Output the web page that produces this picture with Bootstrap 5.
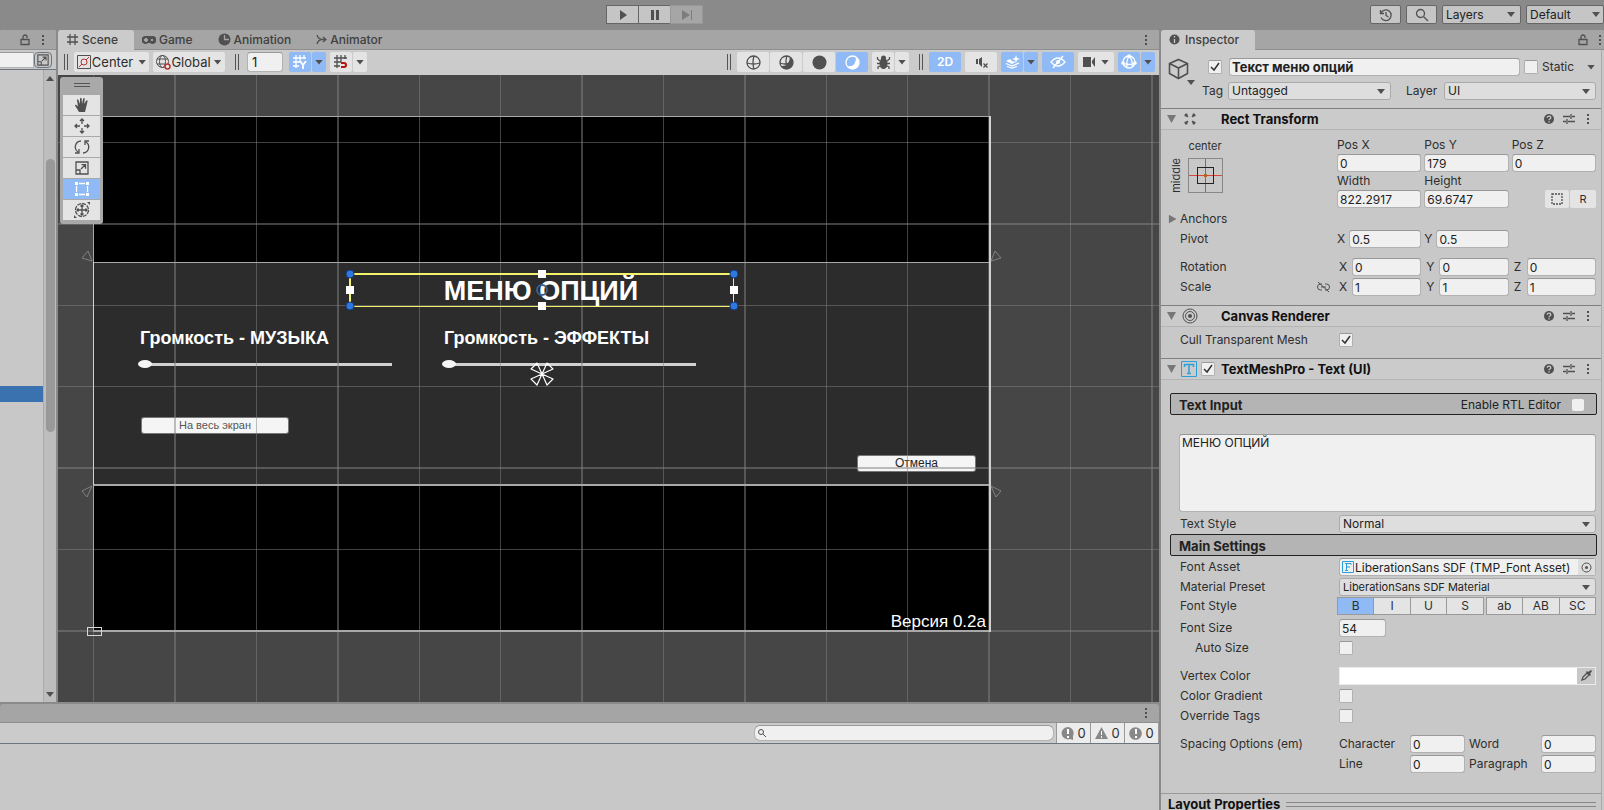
<!DOCTYPE html>
<html lang="en">
<head>
<meta charset="utf-8">
<meta name="viewport" content="width=device-width, initial-scale=1">
<title>Scene editor</title>
<link rel="stylesheet" href="https://cdn.jsdelivr.net/npm/bootstrap@5.3.0/dist/css/bootstrap.min.css">
<style>
:root{--ink:#2e2e2e;--pane:#c8c8c8;--bar:#cbcbcb;--strip:#a5a5a5;--edge:#8a8a8a;--pick:#8fbaf5;--btn:#e4e4e4;--field:#f0f0f0}
body{font:12px/18px Inter,"Liberation Sans",sans-serif;color:var(--ink);background:var(--edge);overflow:hidden}
svg{display:block;flex:none}
.ic{fill:none;stroke:#505050;stroke-width:1.3}
.ic .f{fill:#505050;stroke:none}
.app{display:flex;flex-direction:column;height:100vh}
.work{display:grid;grid-template:minmax(0,1fr)/minmax(0,1fr) 443px;flex:1;min-height:0;column-gap:2px}
.leftside{display:flex;flex-direction:column;min-width:0}
.docks{display:grid;grid-template:minmax(0,1fr)/56px minmax(0,1fr);column-gap:2px;flex:1;min-height:0}
button{border:0;padding:0;background:none;color:inherit;font:inherit;display:flex;align-items:center;justify-content:center}

/* top bar */
.topbar{height:30px;padding-top:5px}
.tb{height:19px;background:#c5c5c5;border:1px solid #666;border-radius:2px}
.play .tb{width:33px;margin-right:-1px;border-radius:0}
.play .off{background:#a6a6a6;border-color:#979797}
.form-select.tsel{width:78px;height:19px;background-color:#c5c5c5;border-color:#666;border-radius:2px}
.play{margin-left:606px}

/* tabs */
.tabs{height:20px;background:var(--strip);border-bottom:1px solid #8f8f8f;display:flex;align-items:center;border-radius:3px 3px 0 0;flex:none}
.tab-i{height:20px;display:flex;align-items:center;gap:3px;padding:0 17px 0 8px;color:#404040;font-weight:500;text-decoration:none;border-radius:3px 3px 0 0}
.tab-i.on{background:var(--bar);padding-right:16px}
.more{margin-left:auto;margin-right:11px}
.pane{background:var(--pane);display:flex;flex-direction:column;min-width:0;min-height:0;border-radius:3px 3px 0 0;overflow:hidden}

/* shared controls */
.form-control,.form-select{font:12px/16px Inter,"Liberation Sans",sans-serif;color:#222;height:18px;min-height:0;padding:0 2px;border:1px solid #b2b2b2;border-top-color:#999;border-radius:3px;background-color:var(--field);box-shadow:none;width:100%;min-width:0}
.form-select{background-color:#dedede;border-color:#aaa;padding:0 16px 0 3px;background-image:url("data:image/svg+xml,%3Csvg xmlns='http://www.w3.org/2000/svg' viewBox='0 0 8 5'%3E%3Cpath d='M0 0h8L4 5z' fill='%23505050'/%3E%3C/svg%3E");background-size:8px 5px;background-position:right 5px center}
.tick{appearance:none;width:14px;height:14px;margin:0;border:1px solid #b0b0b0;border-top-color:#999;border-radius:2px;background:var(--field) center/12px 12px no-repeat;flex:none}
.tick:checked{background-image:url("data:image/svg+xml,%3Csvg xmlns='http://www.w3.org/2000/svg' viewBox='0 0 12 12'%3E%3Cpath d='M2 6l3 3 5-7' fill='none' stroke='%23333' stroke-width='1.5'/%3E%3C/svg%3E")}
.dd{width:8px;height:5px;background:#505050;clip-path:polygon(0 0,100% 0,50% 100%);flex:none}
.fold{width:9px;height:8px;background:#777}

/* scene toolbar */
.sbar{height:25px;background:var(--bar);display:flex;align-items:center;padding:0 4px 1px 6px;flex:none;font-size:13px}
.sbar .form-control{font-size:13px}
.grip{width:4px;height:16px;border:solid #555;border-width:0 1px;flex:none}
.tg{height:20px;background:var(--btn);border-radius:2px}
.tg.on{background:var(--pick);color:#fff}
.tg.on .ic,.tools .on .ic{stroke:#fff}.tg.on .ic .f,.tools .on .ic .f{fill:#fff}
.w32{width:32px}.w22{width:22px}.w14{width:14px}
.btns{display:flex;gap:1px}

/* scene canvas */
.view{position:relative;flex:1;background:#464646;overflow:hidden;font-family:"Liberation Sans",Arial,sans-serif;color:#fff}
.view>*{position:absolute}
.frame{left:35px;top:41px;width:897px;height:515px;background:#000}
.menu{left:36px;top:187px;width:895px;height:223px;background:#2c2c2c}
.ttl{left:291px;top:200px;width:384px;font-size:27px;line-height:32px;font-weight:700;text-align:center;margin:0}
.vol{font-size:18px;line-height:20px;font-weight:700;white-space:nowrap}
.sld{appearance:none;width:254px;height:8px;background:linear-gradient(#d2d0d0,#d2d0d0) 4px 3px/250px 3px no-repeat;margin:0}
.sld::-webkit-slider-thumb{appearance:none;width:14px;height:8px;border-radius:50%;background:#f5f5f5;border:0}
.gb{background:#f5f5f5;border-radius:2px;color:#555;box-shadow:0 0 0 1px #777;line-height:15px;height:15px}
.ver{right:0;top:1px;font-size:17px;line-height:20px}
.tools{left:2px;top:2px;width:43px;background:#a9a9a9;border-radius:3px;padding:6px 3px 4px;display:flex;flex-direction:column;gap:1px}
.tools .hand{width:16px;height:4px;border:solid #555;border-width:1px 0;margin:0 auto 7px}
.tools button{height:20px;background:var(--btn)}
.tools .on{background:var(--pick)}

/* hierarchy */
.sb{width:13px;border-left:1px solid #aaa;background:#bdbdbd;display:flex;flex-direction:column;align-items:center;padding:6px 0 5px}
.thumb{width:9px;height:273px;border-radius:5px;background:#999}

/* console */
.console{height:108px;padding-top:2px;flex:none}
.cnt{height:20px;width:33px;background:#ececec;gap:3px;font-size:13px}

/* inspector */
.insp{background:var(--pane);min-width:0;border-radius:3px 3px 0 0;overflow:hidden;display:flex;flex-direction:column}
.body-i{width:441px;border-right:1px solid #aaa}
.ch{display:flex;align-items:center;height:22px;border-top:1px solid #7f7f7f;border-bottom:1px solid #b4b4b4;background:var(--bar);padding:0 11px 0 6px;color:#111}
.ch h2,.box h3,.lp{font-size:13px;line-height:18px;font-weight:700;margin:0}
.rw{display:grid;grid-template-columns:159px minmax(0,1fr);height:18px;margin:0 5px 2px 19px;align-items:center}
.tri3{display:grid;grid-template-columns:repeat(3,minmax(0,1fr));column-gap:3px}
.wide{column-gap:5px}
.xyz{display:flex;gap:4px;align-items:center}
.box{height:22px;border:1px solid #222;border-radius:2px;background:#b4b4b4;margin:0 4px 0 9px;padding:2px 12px 0 8px;display:flex;align-items:center;color:#222}
.fs{height:18px;background:var(--btn);border:1px solid #999;margin-right:-1px;flex:1}
.fs.on{background:var(--pick)}
.anch{width:35px;height:35px}
</style>
</head>
<body>
<svg width="0" height="0" class="position-absolute" aria-hidden="true">
  <symbol id="lock" viewBox="0 0 10 12"><path d="M1 5.500h8v5H1zM3 5.500V3a2 2 0 0 1 4 0v1"/></symbol>
  <symbol id="dots" viewBox="0 0 3 12"><path fill="#505050" stroke="none" d="M0 1h2v2H0zM0 5h2v2H0zM0 9h2v2H0z"/></symbol>
  <symbol id="help" viewBox="0 0 12 12"><circle cx="6" cy="6" r="5" fill="#505050" stroke="none"/><path stroke="#cbcbcb" d="M4.200 4.700a1.800 1.500 0 1 1 2.600 1.300q-.8.300-.8 1.200M6 8.200v1.200"/></symbol>
  <symbol id="sliders" viewBox="0 0 12 12"><path d="M0 3.500h7M9 3.500h3M8 1v5M0 8.500h3M5 8.500h7M4 6v5"/></symbol>
  <symbol id="scale" viewBox="0 0 14 14"><path d="M1 1h12v12H1zM1 9h4v4M6 8l4-4M6.500 3.700h4v4"/></symbol>
  <symbol id="snapgrid" viewBox="0 0 16 16"><path d="M4 1v13M8 1v7M12 1v4M1 4h13M1 8h7M1 12h6"/></symbol>
</svg>

<div class="app">
  <header class="topbar d-flex">
    <div class="play d-flex">
      <button class="tb" aria-label="Play"><svg class="ic" width="12" height="12"><path class="f" d="M3 1l7 5-7 5z"/></svg></button>
      <button class="tb" aria-label="Pause"><svg class="ic" width="12" height="12"><path class="f" d="M2 1h3v10H2zM7 1h3v10H7z"/></svg></button>
      <button class="tb off" aria-label="Step"><svg width="12" height="12"><path fill="#7d7d7d" d="M1 1l8 5-8 5zM10 1h1v10h-1z"/></svg></button>
    </div>
    <div class="ms-auto d-flex" style="gap:5px">
      <button class="tb" style="width:31px" aria-label="History"><svg class="ic" width="14" height="14"><path d="M2 5a5.300 5.300 0 1 1 0 4.500M1.500 2v3.500H5M7 4v3.500l2.500 1.500"/></svg></button>
      <button class="tb" style="width:31px" aria-label="Search"><svg class="ic" width="14" height="14"><circle cx="5.500" cy="5.500" r="4"/><path d="M8.500 8.500l4.500 4.500"/></svg></button>
      <select class="form-select tsel" style="width:79px" aria-label="Layers"><option>Layers</option></select>
      <select class="form-select tsel" style="background-position:right 3px center" aria-label="Layout"><option>Default</option></select>
    </div>
  </header>

  <div class="work">
    <div class="leftside">
      <div class="docks">
        <section class="pane" aria-label="Hierarchy">
          <div class="tabs">
            <svg class="ic ms-auto" width="10" height="12"><use href="#lock"/></svg>
            <svg style="margin:0 11px 0 12px" width="3" height="12"><use href="#dots"/></svg>
          </div>
          <div class="d-flex align-items-center border-bottom border-secondary pe-1" style="height:20px">
            <input class="form-control rounded-0 border-start-0" aria-label="Filter" style="height:16px">
            <button class="border border-secondary rounded-1" style="width:18px;height:16px;flex:none" aria-label="Expand"><svg class="ic" width="12" height="12"><use href="#scale"/></svg></button>
          </div>
          <div class="d-flex flex-grow-1">
            <div class="flex-grow-1"><div style="margin-top:316px;height:16px;background:#3a72b0"></div></div>
            <div class="sb">
              <span class="dd" style="transform:rotate(180deg)"></span>
              <span class="thumb" style="margin-top:78px"></span>
              <span class="dd mt-auto"></span>
            </div>
          </div>
        </section>

        <section class="pane" aria-label="Scene">
          <nav class="tabs">
            <a href="#" class="tab-i on"><svg class="ic" width="13" height="13"><path d="M4 1v11M9 1v11M1 4h11M1 9h11"/></svg>Scene</a>
            <a href="#" class="tab-i"><svg class="ic" width="14" height="10"><path class="f" fill-rule="evenodd" d="M4 1h6a4 4 0 1 1-2 7H6a4 4 0 1 1-2-7zM3 3v1H2v2h1v1h2V6h1V4H5V3zM9 4v2h2V4z"/></svg>Game</a>
            <a href="#" class="tab-i"><svg class="ic" width="13" height="13"><circle class="f" cx="6.500" cy="6.500" r="6"/><path style="stroke:#a5a5a5" d="M6.500 2v4.500H11"/></svg>Animation</a>
            <a href="#" class="tab-i"><svg class="ic" width="11" height="13"><path d="M1 2c1 3 2 4.500 5 4.500M1 11c1-3 2-4.500 5-4.500h3M7 4l3 2.500L7 9"/></svg>Animator</a>
            <svg class="more" width="3" height="12"><use href="#dots"/></svg>
          </nav>
          <div class="sbar">
            <span class="grip"></span>
            <button class="tg" style="width:75px;margin-left:6px;gap:1px"><svg width="14" height="14" fill="none" stroke="#505050"><path d="M.5.500h13v13H.5z"/><g stroke="#b33"><circle cx="7" cy="7" r="3"/><path d="M2 12l3-3M9 5l3-3"/></g></svg>Center<span class="dd ms-1"></span></button>
            <button class="tg" style="width:72px;margin-left:4px"><svg class="ic" width="15" height="15" style="stroke-width:1"><circle cx="6.500" cy="6.500" r="6"/><ellipse cx="6.500" cy="6.500" rx="3" ry="6"/><path d="M1 4h11M1 9h8"/><circle cx="11.500" cy="11.500" r="2.500" style="fill:#e4e4e4;stroke:#b33;stroke-width:1.500"/></svg>Global<span class="dd" style="margin-left:3px"></span></button>
            <span class="grip" style="margin-left:10px"></span>
            <input class="form-control ps-1" style="width:36px;height:20px;margin-left:8px" value="1" aria-label="Grid size">
            <div class="btns" style="margin-left:6px">
              <button class="tg on w22" aria-label="Grid"><svg class="ic" width="16" height="16"><use href="#snapgrid"/><path d="M8 7l3 4 3-4M11 11v4" stroke-width="1.800"/></svg></button>
              <button class="tg on w14" aria-label="Grid options"><span class="dd"></span></button>
            </div>
            <div class="btns" style="margin-left:4px">
              <button class="tg w22" aria-label="Snap"><svg class="ic" width="16" height="16"><use href="#snapgrid"/><path d="M8 9h3a2 2 0 0 1 0 4H8" style="stroke:#b11;stroke-width:2"/></svg></button>
              <button class="tg w14" aria-label="Snap options"><span class="dd"></span></button>
            </div>

            <span class="grip ms-auto"></span>
            <div class="btns" style="margin-left:6px">
              <button class="tg w32" aria-label="Wireframe"><svg class="ic" width="15" height="15"><circle cx="7.500" cy="7.500" r="6.500"/><path d="M1 8q6.500 2 13 0M8 1q-2 6.500 0 13"/></svg></button>
              <button class="tg w32" aria-label="Shaded wireframe"><svg class="ic" width="15" height="15"><path class="f" d="M11 2a6.500 6.500 0 1 1-9 9q8 1 9-9z"/><circle cx="7.500" cy="7.500" r="6.500"/><path d="M1 8q5 2 9 0M8 1q-2 5 0 10"/></svg></button>
              <button class="tg w32" aria-label="Unlit"><svg class="ic" width="15" height="15"><circle class="f" cx="7.500" cy="7.500" r="7"/></svg></button>
              <button class="tg on w32" aria-label="Shaded"><svg class="ic" width="15" height="15"><path class="f" d="M11 2a6.500 6.500 0 1 1-9 9q9 2 9-9z"/><circle cx="7.500" cy="7.500" r="6.500"/></svg></button>
            </div>
            <div class="btns" style="margin-left:4px">
              <button class="tg w22" aria-label="Debug draw"><svg class="ic" width="15" height="15"><ellipse class="f" cx="7.500" cy="8.500" rx="4" ry="5.500"/><circle class="f" cx="7.500" cy="3" r="2.500"/><path d="M4 6L1.500 4V2M11 6l2.500-2V2M4 8.500H1M11 8.500h3M4 11l-2 1v2M11 11l2 1v2"/></svg></button>
              <button class="tg w14" aria-label="Debug options"><span class="dd"></span></button>
            </div>
            <span class="grip" style="margin-left:10px"></span>
            <button class="tg on w32 fw-semibold" style="font-size:12px;margin-left:6px">2D</button>
            <button class="tg w32" style="margin-left:4px" aria-label="Mute"><svg class="ic" width="14" height="14"><path class="f" d="M2 4h2v5H2zM5 4l3-2v10L5 9z"/><path d="M9.500 8.500l4 4M13.500 8.500l-4 4"/></svg></button>
            <div class="btns" style="margin-left:4px">
              <button class="tg on w22" aria-label="Effects"><svg class="ic" width="15" height="14"><path class="f" d="M1 6l4-2 2 2 4 1-4 2z"/><path d="M1 8.500l6 2.500 7-3M2 11.500L7 13l5-1.500"/><path class="f" d="M11 0l1 3 3 1-3 1-1 3-1-3-3-1 3-1z"/></svg></button>
              <button class="tg on w14" aria-label="Effects options"><span class="dd"></span></button>
            </div>
            <button class="tg on w32" style="margin-left:4px" aria-label="Visibility"><svg class="ic" width="16" height="14"><path d="M1 7q7-8 14 0-7 8-14 0zM3 13L13 1"/><circle class="f" cx="8" cy="7" r="2"/></svg></button>
            <button class="tg" style="width:36px;margin-left:4px;gap:5px" aria-label="Camera"><svg class="ic" width="13" height="12"><path class="f" d="M0 1h8v10H0zM9 5l3-4v10L9 7z"/></svg><span class="dd"></span></button>
            <div class="btns" style="margin-left:4px">
              <button class="tg on w22" aria-label="Gizmos"><svg class="ic" width="16" height="16"><circle cx="8" cy="8" r="6"/><path d="M1 9q7 3 14 0M8 2q-3 5-2 12M8 2q4 4 3 10"/><g class="f"><circle cx="8" cy="2" r="1.800"/><circle cx="2" cy="9" r="1.800"/><circle cx="14" cy="9" r="1.800"/></g></svg></button>
              <button class="tg on w14" aria-label="Gizmo options"><span class="dd"></span></button>
            </div>
          </div>

          <div class="view">
            <div class="frame"></div>
            <div class="menu"></div>
            <input class="sld" type="range" value="0" aria-label="Громкость - МУЗЫКА" style="left:80px;top:285px">
            <input class="sld" type="range" value="0" aria-label="Громкость - ЭФФЕКТЫ" style="left:384px;top:285px">
            <button class="gb" style="left:84px;top:343px;width:146px;font-size:11px">На весь экран</button>
            <button class="gb text-dark" style="left:800px;top:381px;width:117px">Отмена</button>
            <!-- grid, frame outlines and anchor marks -->
            <svg style="left:0;top:0" width="2400" height="1600" shape-rendering="crispEdges">
              <g fill="#828282" fill-opacity=".5">
                <path d="M35 0h1v1600h-1zM116 0h2v1600h-2zM198 0h1v1600h-1zM279 0h2v1600h-2zM361 0h1v1600h-1zM442 0h1v1600h-1zM523 0h2v1600h-2zM605 0h1v1600h-1zM686 0h2v1600h-2zM768 0h1v1600h-1zM849 0h1v1600h-1zM930 0h2v1600h-2zM1012 0h1v1600h-1zM1093 0h2v1600h-2z"/>
                <path d="M0 67h2400v1H0zM0 148h2400v2H0zM0 230h2400v1H0zM0 311h2400v1H0zM0 392h2400v2H0zM0 474h2400v1H0zM0 555h2400v2H0z"/>
              </g>
              <g fill="#a8a8a8"><path d="M35 41h897v1H35zM35 41h1v516h-1zM35 187h897v1H35zM35 409h897v2H35zM35 555h897v2H35z"/><path fill="#d0d0d0" d="M931 41h2v516h-2zM35 187h1v223h-1z"/></g>
              <g fill="none" stroke="#808080" shape-rendering="auto"><path d="M34 186l-10-3 6-7zM34 411l-10 5 5 6zM933 186l10-3-6-7zM933 411l10 5-5 6z"/></g>
              <path d="M29 552h14v8H29z" fill="none" stroke="#d8d8d8"/>
            </svg>
            <h1 class="ttl">МЕНЮ ОПЦИЙ</h1>
            <div class="vol" style="left:82px;top:253px">Громкость - МУЗЫКА</div>
            <div class="vol" style="left:386px;top:253px">Громкость - ЭФФЕКТЫ</div>
            <div style="left:35px;top:536px;width:893px;height:20px"><div class="ver position-absolute">Версия 0.2а</div></div>
            <!-- selection rectangle with its handles, and the pivot -->
            <svg style="left:280px;top:190px" width="410" height="130">
              <path fill="#f4f26b" d="M12 8h384v2H12zM12 41h384v1H12zM11 8h2v34h-2zM395 8h1v34h-1z"/>
              <g fill="#fff"><path d="M8 21h8v8H8zM392 21h8v8h-8zM200 5h8v8h-8zM200 37h8v8h-8z"/></g>
              <g fill="#2f78e0" stroke="#143a78"><circle cx="12" cy="9" r="4"/><circle cx="396" cy="9" r="4"/><circle cx="12" cy="41" r="4"/><circle cx="396" cy="41" r="4"/></g>
              <circle cx="204" cy="25" r="5" fill="none" stroke="#3a5f91" stroke-width="2"/>
              <path d="M204 109l-5-11-6 6zM204 109l5-11 6 6zM204 109l-11 5 6 6zM204 109l11 5-6 6z" fill="none" stroke="#fff" stroke-width="1.200" stroke-linejoin="round"/>
            </svg>
            <div class="tools">
              <span class="hand"></span>
              <button aria-label="Hand"><svg class="ic" width="16" height="16"><path class="f" d="M5 15L1 8.500q0-1.300 1.500-.5L4 9.500 3 3q.7-1.400 1.500 0L6 7V1.500q.8-1.400 1.600 0L8 7l1.200-5.500q1-1.200 1.500 0L10.300 7l2-3.500q1.200-.8 1.300.5L12 11l-1 4z"/></svg></button>
              <button aria-label="Move"><svg class="ic" width="16" height="16"><path d="M8 1v5M8 10v5M1 8h5M10 8h5M6 3l2-2 2 2M6 13l2 2 2-2M3 6L1 8l2 2M13 6l2 2-2 2"/></svg></button>
              <button aria-label="Rotate"><svg class="ic" width="16" height="16"><path d="M7 2a6 6 0 0 0-3 11M1 14h4v-4M9 14a6 6 0 0 0 3-11M15 2h-4v4"/></svg></button>
              <button aria-label="Scale"><svg class="ic" width="14" height="14"><use href="#scale"/></svg></button>
              <button class="on" aria-label="Rect"><svg class="ic" width="16" height="16"><path d="M5 2.500h6M5 13.500h6M2.500 5v6M13.500 5v6"/><path class="f" d="M1 1h3v3H1zM12 1h3v3h-3zM1 12h3v3H1zM12 12h3v3h-3z"/></svg></button>
              <button aria-label="Transform"><svg class="ic" width="16" height="16"><circle cx="8" cy="8" r="6.500" stroke-dasharray="4 1"/><path d="M8 3v10M3 8h10M6.500 4.500L8 3l1.500 1.500M6.500 11.500L8 13l1.500-1.500M4.500 6.500L3 8l1.500 1.500M11.500 6.500L13 8l-1.500 1.500"/><path class="f" d="M13 0h3v3zM0 13v3h3z"/></svg></button>
            </div>
          </div>
        </section>
      </div>

      <section class="console d-flex flex-column" aria-label="Console">
        <div class="tabs" style="height:19px"><svg class="more" width="3" height="12"><use href="#dots"/></svg></div>
        <div class="d-flex align-items-center border-bottom border-secondary" style="height:21px;background:#cbcbcb">
          <div class="position-relative ms-auto" style="width:300px">
            <input class="form-control rounded-2" style="height:16px;padding-left:16px" type="search" aria-label="Search console">
            <svg class="ic position-absolute" style="left:4px;top:4px;stroke-width:1" width="9" height="9"><circle cx="3" cy="3" r="2.500"/><path d="M5 5l3 3"/></svg>
          </div>
          <div class="btns" style="background:#999;padding:0 1px;margin-left:2px">
            <button class="cnt"><svg width="13" height="13"><path fill="#888" d="M6.500 0a6.200 6.200 0 0 1 5.500 9v4l-3-1a6.200 6.200 0 1 1-2.500-12z"/><path fill="#fff" d="M6 2h2v5H6zM6 9h2v2H6z"/></svg>0</button>
            <button class="cnt"><svg width="13" height="12"><path fill="#888" d="M6.500 0L13 12H0z"/><path fill="#fff" d="M6 4h1v4H6zM6 9h1v2H6z"/></svg>0</button>
            <button class="cnt"><svg width="13" height="13"><circle cx="6.500" cy="6.500" r="6.300" fill="#888"/><path fill="#fff" d="M6 2h2v5H6zM6 9h2v2H6z"/></svg>0</button>
          </div>
        </div>
        <div class="flex-grow-1" style="background:#c8c8c8"></div>
      </section>
    </div>

    <aside class="insp" aria-label="Inspector">
      <div class="tabs">
        <a href="#" class="tab-i on" style="gap:5px"><svg class="ic" width="11" height="11"><circle class="f" cx="5.500" cy="5.500" r="5"/><path d="M5.500 2v1.500M5.500 5v4" style="stroke:#cbcbcb"/></svg>Inspector</a>
        <svg class="ic ms-auto" style="margin-right:11px" width="10" height="12"><use href="#lock"/></svg>
        <svg style="margin-right:2px" width="3" height="12"><use href="#dots"/></svg>
      </div>
      <div class="body-i flex-grow-1">
        <div class="d-flex" style="height:58px;padding:8px 5px 0 7px;background:#cbcbcb">
          <div class="position-relative" style="width:40px;flex:none">
            <svg class="ic" width="21" height="22" style="stroke-width:1.600"><path d="M10.500 1.500l9 4v10l-9 5-9-5v-10zM1.500 5.500l9 4.500 9-4.500M10.500 10v10.500"/></svg>
            <span class="dd position-absolute" style="left:19px;top:22px"></span>
          </div>
          <div class="flex-grow-1">
            <div class="d-flex align-items-center" style="height:18px">
              <input type="checkbox" class="tick" checked aria-label="Active">
              <input class="form-control fw-bold" style="margin:0 4px 0 7px;font-size:13px" value="Текст меню опций" aria-label="Name">
              <input type="checkbox" class="tick" id="st"><label for="st" style="margin-left:4px;width:45px;flex:none">Static</label><span class="dd" style="margin-right:1px"></span>
            </div>
            <div class="d-flex align-items-center" style="height:18px;margin-top:6px">
              <label for="tag" class="text-end" style="width:25px;margin:0 5px 0 -10px;flex:none">Tag</label>
              <select id="tag" class="form-select" style="flex:1 1 163px"><option>Untagged</option></select>
              <label for="lay" style="width:31px;margin:0 7px 0 15px;flex:none">Layer</label>
              <select id="lay" class="form-select" style="flex:1 1 152px"><option>UI</option></select>
            </div>
          </div>
        </div>

        <div class="ch">
          <span class="dd fold"></span>
          <svg class="ic" style="margin-left:7px" width="14" height="14"><path d="M2 2l3 3M12 2L9 5M2 12l3-3M12 12L9 9"/><path class="f" d="M1 4l3-3 1 4zM13 4l-3-3-1 4zM1 10l3 3 1-4zM13 10l-3 3-1-4z"/></svg>
          <h2 class="flex-grow-1" style="margin-left:24px">Rect Transform</h2>
          <svg class="ic" width="12" height="12"><use href="#help"/></svg><svg class="ic" style="margin:0 12px 0 8px" width="12" height="12"><use href="#sliders"/></svg><svg width="3" height="12"><use href="#dots"/></svg>
        </div>
        <div class="d-flex" style="margin:6px 5px 0 9px">
          <div style="width:167px;flex:none">
            <div class="text-center" style="width:70px;font-size:11px;line-height:20px">center</div>
            <div class="d-flex align-items-center" style="gap:6px;padding-top:2px">
              <span style="writing-mode:vertical-rl;transform:rotate(180deg);font-size:11px;line-height:12px">middle</span>
              <svg class="anch" fill="none" shape-rendering="crispEdges"><path stroke="#888" d="M.5.500h34v34H.5z"/><path stroke="#d8453c" d="M17.500 1v33M1 17.500h33"/><path stroke="#222" d="M9.500 9.500h16v16h-16z"/><path fill="#b5651d" d="M16 16h3v3h-3z"/></svg>
            </div>
          </div>
          <div class="flex-grow-1">
            <div class="tri3"><label for="px">Pos X</label><label for="py">Pos Y</label><label for="pz">Pos Z</label>
              <input id="px" class="form-control" value="0"><input id="py" class="form-control" value="179"><input id="pz" class="form-control" value="0">
              <label for="wd">Width</label><label for="hg">Height</label><span></span>
              <input id="wd" class="form-control" value="822.2917"><input id="hg" class="form-control" value="69.6747">
              <div class="btns justify-content-end"><button class="tg" style="width:24px;height:18px" aria-label="Blueprint"><svg class="ic" width="12" height="12"><path stroke-dasharray="2 1" d="M1 1h10v10H1z"/></svg></button><button class="tg" style="width:26px;height:18px;font-size:11px">R</button></div>
            </div>
          </div>
        </div>
        <div class="rw" style="margin-top:2px"><div class="position-relative">Anchors<span class="dd fold position-absolute" style="left:-12px;top:5px;transform:rotate(-90deg)"></span></div></div>
        <div class="rw">
          <span>Pivot</span>
          <div class="tri3" style="margin-left:-2px"><div class="xyz"><label for="pvx">X</label><input id="pvx" class="form-control" value="0.5"></div><div class="xyz"><label for="pvy">Y</label><input id="pvy" class="form-control" value="0.5"></div></div>
        </div>
        <div class="rw" style="margin-top:10px">
          <span>Rotation</span>
          <div class="tri3 wide"><div class="xyz"><label for="rx" style="width:11px">X</label><input id="rx" class="form-control" value="0"></div><div class="xyz"><label for="ry" style="width:11px">Y</label><input id="ry" class="form-control" value="0"></div><div class="xyz"><label for="rz" style="width:11px">Z</label><input id="rz" class="form-control" value="0"></div></div>
        </div>
        <div class="rw">
          <div class="d-flex align-items-center justify-content-between" style="padding-right:9px"><span>Scale</span><svg class="ic" style="stroke-width:1" width="13" height="12"><path d="M5 3H3.500a3 3 0 0 0 0 6H5M8 3h1.500a3 3 0 0 1 0 6H8M1 1l11 10M4 6h5"/></svg></div>
          <div class="tri3 wide"><div class="xyz"><label for="sx" style="width:11px">X</label><input id="sx" class="form-control" value="1"></div><div class="xyz"><label for="sy" style="width:11px">Y</label><input id="sy" class="form-control" value="1"></div><div class="xyz"><label for="sz" style="width:11px">Z</label><input id="sz" class="form-control" value="1"></div></div>
        </div>

        <div class="ch" style="margin-top:9px">
          <span class="dd fold"></span>
          <svg class="ic" style="stroke-width:1;margin-left:6px" width="16" height="16"><circle cx="8" cy="8" r="7"/><circle cx="8" cy="8" r="4.500"/><circle class="f" cx="8" cy="8" r="2"/></svg>
          <h2 class="flex-grow-1" style="margin-left:23px">Canvas Renderer</h2>
          <svg class="ic" width="12" height="12"><use href="#help"/></svg><svg class="ic" style="margin:0 12px 0 8px" width="12" height="12"><use href="#sliders"/></svg><svg width="3" height="12"><use href="#dots"/></svg>
        </div>
        <div class="rw" style="margin-top:4px"><label for="cull">Cull Transparent Mesh</label><input type="checkbox" class="tick" id="cull" checked></div>

        <div class="ch" style="margin-top:9px">
          <span class="dd fold"></span>
          <svg style="margin-left:5px" width="16" height="16" fill="none" stroke="#2a9fd8"><path d="M.5.500h15v15H.5z"/><path stroke-width="1.500" d="M3.500 6V3.500h9V6M8 3.500v9M6 12.500h4"/></svg>
          <input type="checkbox" class="tick" checked aria-label="Enabled" style="margin-left:4px">
          <h2 class="flex-grow-1" style="margin-left:6px">TextMeshPro - Text (UI)</h2>
          <svg class="ic" width="12" height="12"><use href="#help"/></svg><svg class="ic" style="margin:0 12px 0 8px" width="12" height="12"><use href="#sliders"/></svg><svg width="3" height="12"><use href="#dots"/></svg>
        </div>
        <div class="box" style="margin-top:13px"><h3 class="flex-grow-1">Text Input</h3><label for="rtl">Enable RTL Editor</label><input type="checkbox" class="tick border-0" id="rtl" style="margin-left:11px;width:12px;height:12px"></div>
        <div style="margin:19px 5px 3px 18px"><textarea class="form-control d-block" style="height:78px;resize:none" aria-label="Text">МЕНЮ ОПЦИЙ</textarea></div>
        <div class="rw mb-0"><label for="ts">Text Style</label><select id="ts" class="form-select"><option>Normal</option></select></div>
        <div class="box" style="margin-top:1px"><h3>Main Settings</h3></div>
        <div class="rw" style="margin-top:2px"><label for="fa">Font Asset</label>
          <div class="d-flex position-relative"><input id="fa" class="form-control" style="padding:0 18px 0 15px" value="LiberationSans SDF (TMP_Font Asset)">
            <svg class="position-absolute" style="left:3px;top:3px" width="12" height="12" fill="none" stroke="#2a9fd8"><path d="M.5.500h11v11H.5zM3 9.500h3M4.500 9.500v-7M3 2.500h6V4M4.500 6H8"/></svg>
            <button class="position-absolute" style="right:1px;top:1px;width:17px;height:16px;background:#dedede" aria-label="Pick font"><svg class="ic" width="11" height="11" style="stroke-width:1"><circle cx="5.500" cy="5.500" r="4.500"/><circle class="f" cx="5.500" cy="5.500" r="1.500"/></svg></button></div></div>
        <div class="rw"><label for="mp">Material Preset</label><select id="mp" class="form-select" style="font-size:11px"><option>LiberationSans SDF Material</option></select></div>
        <div class="rw" style="margin-top:-1px"><span>Font Style</span><div class="d-flex" style="margin-left:-2px;padding-right:1px"><button class="fs on">B</button><button class="fs">I</button><button class="fs">U</button><button class="fs">S</button><button class="fs" style="margin-left:3px">ab</button><button class="fs">AB</button><button class="fs">SC</button></div></div>
        <div class="rw" style="margin-top:4px"><label for="fz">Font Size</label><input id="fz" class="form-control" style="width:47px" value="54"></div>
        <div class="rw"><label for="as" style="padding-left:15px">Auto Size</label><input type="checkbox" class="tick" id="as"></div>
        <div class="rw" style="margin-top:10px"><label for="vc">Vertex Color</label><div class="d-flex border border-secondary-subtle" style="height:18px"><button id="vc" class="flex-grow-1 bg-white" aria-label="Vertex Color"></button><button style="width:18px" aria-label="Eyedropper"><svg class="ic" width="12" height="12"><path d="M2 10l1-3 4-4 2 2-4 4z"/><path class="f" d="M6 2l4 4 1-1-1-1 2-3-1-1-3 2-1-1z"/></svg></button></div></div>
        <div class="rw"><label for="cg">Color Gradient</label><input type="checkbox" class="tick" id="cg"></div>
        <div class="rw"><label for="ot">Override Tags</label><input type="checkbox" class="tick" id="ot"></div>
        <div class="rw" style="margin-top:10px"><span>Spacing Options (em)</span>
          <div class="d-flex align-items-center"><label for="s1" style="width:71px;flex:none">Character</label><input id="s1" class="form-control" value="0"><label for="s2" style="width:72px;margin-left:4px;flex:none">Word</label><input id="s2" class="form-control" value="0"></div></div>
        <div class="rw"><span></span>
          <div class="d-flex align-items-center"><label for="s3" style="width:71px;flex:none">Line</label><input id="s3" class="form-control" value="0"><label for="s4" style="width:72px;margin-left:4px;flex:none">Paragraph</label><input id="s4" class="form-control" value="0"></div></div>
        <div class="d-flex align-items-center" style="margin-top:20px;border-top:1px solid #999;padding:1px 5px 0 7px;gap:6px"><h3 class="lp" style="color:#111">Layout Properties</h3><span class="flex-grow-1" style="height:5px;border:solid #888;border-width:1px 0"></span></div>
      </div>
    </aside>
  </div>
</div>
<script src="https://cdn.jsdelivr.net/npm/bootstrap@5.3.0/dist/js/bootstrap.bundle.min.js"></script>
</body>
</html>
